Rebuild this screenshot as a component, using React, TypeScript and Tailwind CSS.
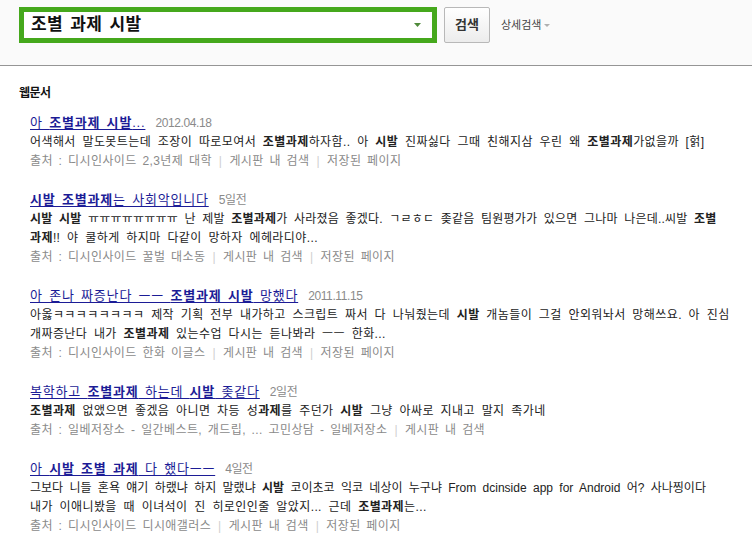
import React from "react";

const Sep = () => <span className="mx-[7px] text-[#cfcfcf]">|</span>;

function Title({ children, date }: { children: React.ReactNode; date: string }) {
  return (
    <div className="leading-[20px] whitespace-nowrap">
      <a className="text-[13px] text-[#1c1c96] underline underline-offset-[2px] decoration-[#1c1c96] tracking-[0.8px] [word-spacing:2px]">
        {children}
      </a>
      <span className="ml-[10px] text-[12px] text-[#8a8a8a] tracking-[-0.4px]">{date}</span>
    </div>
  );
}

function Line({ children, tight }: { children: React.ReactNode; tight?: number }) {
  const t =
    tight === 2
      ? "tracking-[0px]"
      : tight === 1
      ? "tracking-[0.2px]"
      : "tracking-[0.4px]";
  return (
    <div className={"text-[12px] leading-[19px] text-[#222] whitespace-nowrap [word-spacing:3px] " + t}>
      {children}
    </div>
  );
}

function Source({ children }: { children: React.ReactNode }) {
  return (
    <div className="text-[12px] leading-[19px] text-[#8a8a8a] whitespace-nowrap tracking-[0.4px] [word-spacing:2px]">
      {children}
    </div>
  );
}

export default function App() {
  return (
    <div className="min-h-[551px] bg-white [font-family:'Liberation_Sans','Noto_Sans_CJK_KR',sans-serif]">
      <div className="h-[66px] bg-[#fafafa] border-b border-[#959595] flex items-start pt-[7px] pl-[19px]">
        <div className="w-[418px] h-[36px] border-[5px] border-[#45a81c] bg-white flex items-center pl-[7px] pr-[11px]">
          <span className="flex-1 text-[17px] font-bold text-[#111] tracking-[0.4px] [word-spacing:2px]">
            조별 과제 시발
          </span>
          <svg width="7" height="4" viewBox="0 0 7 4">
            <path d="M0 0 L7 0 L3.5 4 Z" fill="#4f8a3a" />
          </svg>
        </div>
        <button className="ml-[7px] w-[46px] h-[36px] rounded-[2px] border border-[#b8b8b8] bg-gradient-to-b from-white to-[#ececec] text-[13px] font-bold text-[#333]">
          검색
        </button>
        <div className="ml-[11px] h-[36px] flex items-center text-[11px] text-[#444]">
          상세검색
          <svg className="ml-[3px]" width="6" height="3" viewBox="0 0 6 3">
            <path d="M0 0 L6 0 L3 3 Z" fill="#b0b0b0" />
          </svg>
        </div>
      </div>

      <div className="pl-[19px] pt-[18px]">
        <div className="text-[12px] font-bold leading-[18px] text-[#111] tracking-[-0.5px]">웹문서</div>
        <div className="pl-[11px] mt-[10px]">
          <div className="mb-[18px]">
            <Title date="2012.04.18">
              아 <b>조별과제 시발</b>...
            </Title>
            <Line>
              어색해서 말도못트는데 조장이 따로모여서 <b>조별과제</b>하자함.. 아 <b>시발</b> 진짜싫다 그때 친해지삼 우린 왜{" "}
              <b>조별과제</b>가없을까 [헑]
            </Line>
            <Source>
              출처 : 디시인사이드 2,3년제 대학
              <Sep />
              게시판 내 검색
              <Sep />
              저장된 페이지
            </Source>
          </div>

          <div className="mb-[18px]">
            <Title date="5일전">
              <b>시발 조별과제</b>는 사회악입니다
            </Title>
            <Line tight={1}>
              <b>시발 시발</b> ㅠㅠㅠㅠㅠㅠㅠㅠ 난 제발 <b>조별과제</b>가 사라졌음 좋겠다. ㄱㄹㅎㄷ 좆같음 팀원평가가 있으면
              그나마 나은데..씨발 <b>조별</b>
            </Line>
            <Line>
              <b>과제</b>!! 야 쿨하게 하지마 다같이 망하자 에헤라디야...
            </Line>
            <Source>
              출처 : 디시인사이드 꿀벌 대소동
              <Sep />
              게시판 내 검색
              <Sep />
              저장된 페이지
            </Source>
          </div>

          <div className="mb-[18px]">
            <Title date="2011.11.15">
              아 존나 짜증난다 ㅡㅡ <b>조별과제 시발</b> 망했다
            </Title>
            <Line>
              아옳ㅋㅋㅋㅋㅋㅋㅋㅋ 제작 기획 전부 내가하고 스크립트 짜서 다 나눠줬는데 <b>시발</b> 개놈들이 그걸 안외워놔서
              망해쓰요. 아 진심
            </Line>
            <Line>
              개짜증난다 내가 <b>조별과제</b> 있는수업 다시는 듣나봐라 ㅡㅡ 한화...
            </Line>
            <Source>
              출처 : 디시인사이드 한화 이글스
              <Sep />
              게시판 내 검색
              <Sep />
              저장된 페이지
            </Source>
          </div>

          <div className="mb-[18px]">
            <Title date="2일전">
              복학하고 <b>조별과제</b> 하는데 <b>시발</b> 좆같다
            </Title>
            <Line>
              <b>조별과제</b> 없앴으면 좋겠음 아니면 차등 성<b>과제</b>를 주던가 <b>시발</b> 그냥 아싸로 지내고 말지 족가네
            </Line>
            <Source>
              출처 : 일베저장소 - 일간베스트, 개드립, ... 고민상담 - 일베저장소
              <Sep />
              게시판 내 검색
            </Source>
          </div>

          <div>
            <Title date="4일전">
              아 <b>시발 조별 과제</b> 다 했다ㅡㅡ
            </Title>
            <Line tight={2}>
              그보다 니들 혼욕 얘기 하랬냐 하지 말랬냐 <b>시발</b> 코이초코 익코 네상이 누구냐 From dcinside app for Android 어?
              사나찡이다
            </Line>
            <Line>
              내가 이애니봤을 때 이녀석이 진 히로인인줄 알았지... 근데 <b>조별과제</b>는...
            </Line>
            <Source>
              출처 : 디시인사이드 디시애갤러스
              <Sep />
              게시판 내 검색
              <Sep />
              저장된 페이지
            </Source>
          </div>
        </div>
      </div>
    </div>
  );
}
